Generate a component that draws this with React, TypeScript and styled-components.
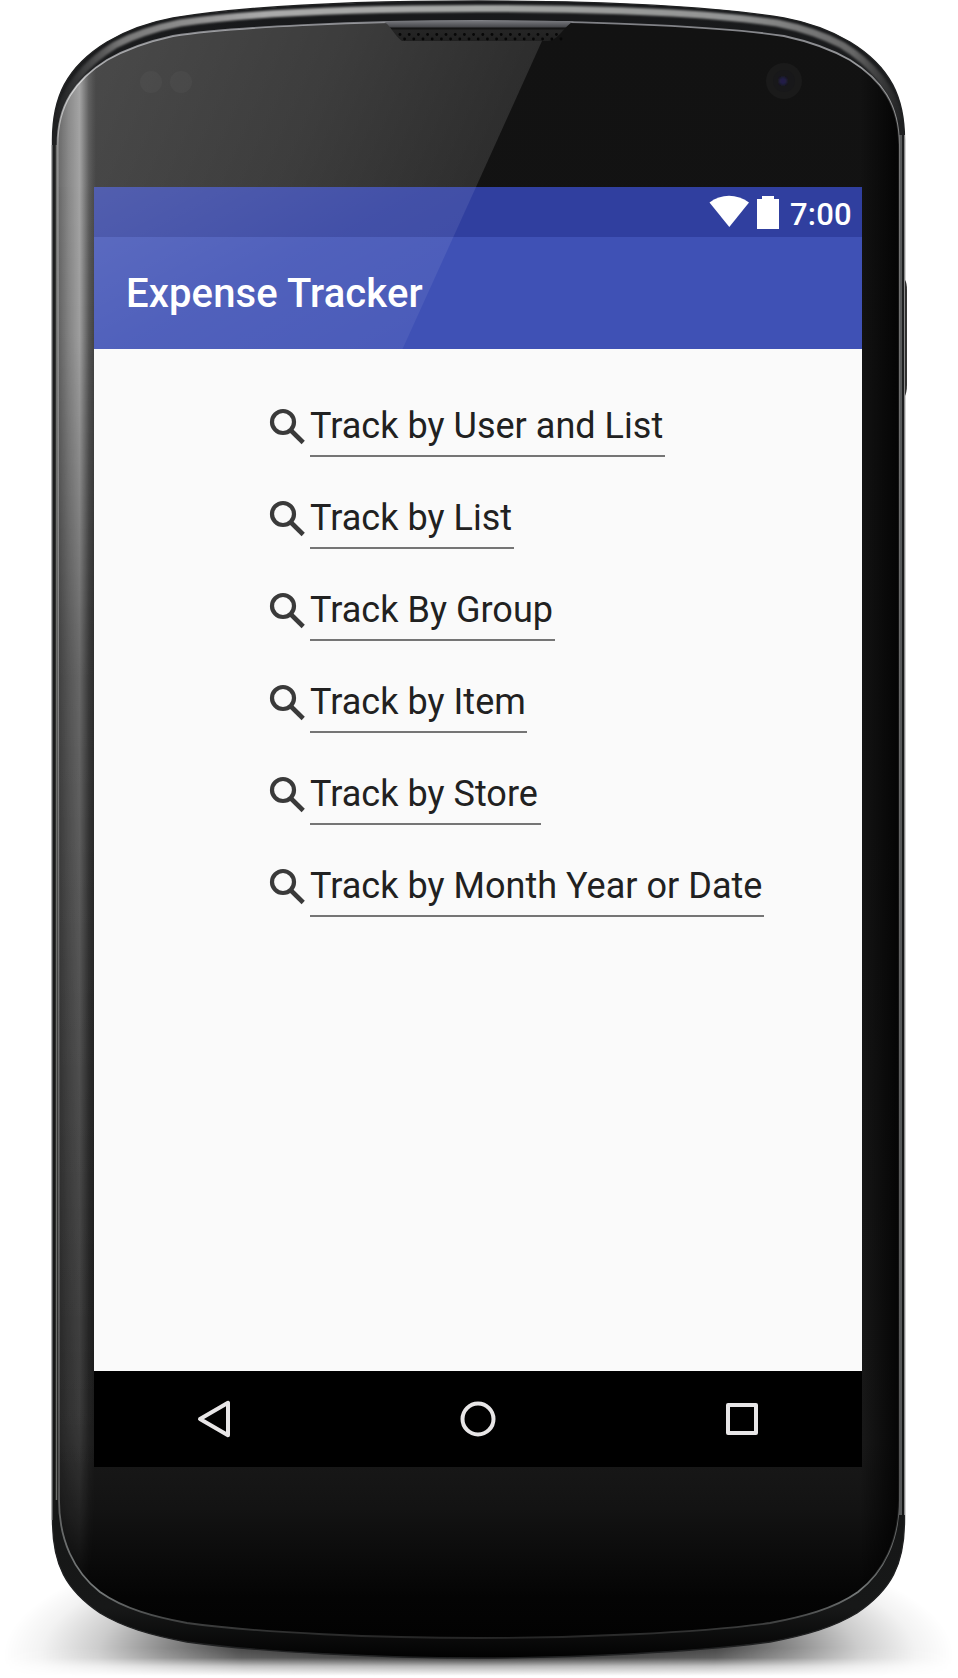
import React from "react";
import styled, { createGlobalStyle } from "styled-components";

const GlobalStyle = createGlobalStyle`
  body { margin: 0; background: #fff; }
  *, *::before, *::after { box-sizing: border-box; }
`;

const Stage = styled.main`
  position: relative;
  width: 958px;
  height: 1678px;
  padding: 187px 96px 211px 94px;
  overflow: hidden;
  font-family: Roboto, "Liberation Sans", sans-serif;
`;

const Artwork = styled.svg`
  position: absolute;
  inset: 0;
  width: 958px;
  height: 1678px;
  pointer-events: none;
`;

const Screen = styled.section`
  position: relative;
  display: flex;
  flex-direction: column;
  width: 768px;
  height: 1280px;
  background: #fafafa;
`;

const StatusBar = styled.div`
  display: flex;
  justify-content: flex-end;
  height: 50px;
  padding-right: 9px;
  background: #303f9f;
  color: #fff;
`;

const StatusIcons = styled.svg`
  width: 70px;
  height: 50px;
  margin-right: 11px;
`;

const Clock = styled.time`
  width: 63px;
  font-size: 31px;
  font-weight: 500;
  line-height: 56px;
  letter-spacing: 0.2px;
  white-space: nowrap;
`;

const Toolbar = styled.header`
  display: flex;
  align-items: center;
  height: 112px;
  padding: 2px 0 0 32px;
  background: #3f51b5;
`;

const Title = styled.h1`
  margin: 0;
  color: #fff;
  font-size: 40px;
  font-weight: 500;
  line-height: 48px;
  letter-spacing: 0.13px;
`;

const Content = styled.ul`
  flex: 1;
  display: flex;
  flex-direction: column;
  gap: 36px;
  margin: 0;
  padding: 52px 0 0 173px;
  list-style: none;
`;

const Entry = styled.li`
  display: flex;
  height: 56px;
`;

const SearchIcon = styled.svg`
  width: 38px;
  height: 38px;
  margin: 7px 5px 0 0;
`;

const Field = styled.span<{ $width: number }>`
  width: ${({ $width }) => $width}px;
  height: 56px;
  border-bottom: 2px solid #757575;
  color: #212121;
  font-size: 36px;
  line-height: 50px;
  letter-spacing: 0.03px;
  white-space: nowrap;
`;

const NavBar = styled.nav`
  display: flex;
  justify-content: center;
  gap: 216px;
  height: 96px;
  padding-top: 24px;
  background: #000;
`;

const NavIcon = styled.svg`
  width: 48px;
  height: 48px;
  fill: none;
  stroke: #e8e6e7;
  stroke-width: 4;
  stroke-linejoin: round;
`;

const entries = [
  { label: "Track by User and List", width: 355 },
  { label: "Track by List", width: 204 },
  { label: "Track By Group", width: 245 },
  { label: "Track by Item", width: 217 },
  { label: "Track by Store", width: 231 },
  { label: "Track by Month Year or Date", width: 454 },
];

const BODY =
  "M52.5 140C52.5 98 66 67 107 42C126 31 146 23 173 18C240 7 350 1 478.5 1C607 1 717 7 784 18C811 23 831 31 850 42C891 67 904.5 98 904.5 140V1520C904.5 1565 891 1590 857 1613C834 1627 807 1635 770 1642C697 1652 577 1658 478.5 1658C380 1658 260 1652 187 1642C150 1635 123 1627 100 1613C66 1590 52.5 1565 52.5 1520Z";
const FACE =
  "M57.5 145C57.5 105 75 80 107 60C127 48.5 150 41 173 36C230 27 360 21 478.5 21C597 21 727 27 784 36C807 41 830 48.5 850 60C882 80 899 105 899 145V1500C899 1540 884 1572 858 1592C834 1609 802 1617 770 1623C697 1633 577 1638 478.5 1638C380 1638 260 1633 187 1623C155 1617 124 1609 100 1592C74 1572 59 1540 59 1500Z";

const speakerHoles = Array.from({ length: 36 }, (_, i) => ({
  x: 400 + i * 4.6,
  y: i % 2 ? 39 : 34.5,
}));

function Device() {
  return (
    <Artwork viewBox="0 0 958 1678" aria-hidden="true">
      <defs>
        <linearGradient id="rim" gradientUnits="userSpaceOnUse" x1="0" y1="1" x2="0" y2="1658">
          <stop offset="0" stopColor="#17181a" />
          <stop offset=".08" stopColor="#202122" />
          <stop offset=".88" stopColor="#151616" />
          <stop offset=".97" stopColor="#171818" />
          <stop offset="1" stopColor="#020202" />
        </linearGradient>
        <linearGradient id="topShine" gradientUnits="userSpaceOnUse" x1="52" y1="0" x2="905" y2="0">
          <stop offset="0" stopColor="#555" stopOpacity="0" />
          <stop offset=".08" stopColor="#777" />
          <stop offset=".25" stopColor="#aaa" />
          <stop offset=".5" stopColor="#a5a7a5" />
          <stop offset=".8" stopColor="#929393" />
          <stop offset=".94" stopColor="#666" />
          <stop offset="1" stopColor="#555" stopOpacity="0" />
        </linearGradient>
        <linearGradient id="face" x1="0" y1="0" x2="0" y2="1">
          <stop offset="0" stopColor="#121212" />
          <stop offset=".5" stopColor="#141414" />
          <stop offset=".88" stopColor="#191919" />
          <stop offset=".92" stopColor="#131313" />
          <stop offset=".975" stopColor="#040404" />
          <stop offset="1" stopColor="#020202" />
        </linearGradient>
        <linearGradient id="leftBand" gradientUnits="userSpaceOnUse" x1="57" y1="0" x2="96" y2="0">
          <stop offset="0" stopColor="#fff" stopOpacity=".16" />
          <stop offset=".3" stopColor="#fff" stopOpacity=".36" />
          <stop offset=".58" stopColor="#fff" stopOpacity=".5" />
          <stop offset=".82" stopColor="#fff" stopOpacity=".12" />
          <stop offset="1" stopColor="#fff" stopOpacity="0" />
        </linearGradient>
        <linearGradient id="bandFade" gradientUnits="userSpaceOnUse" x1="0" y1="60" x2="0" y2="1600">
          <stop offset="0" stopColor="#fff" />
          <stop offset=".18" stopColor="#fff" />
          <stop offset=".4" stopColor="#929292" />
          <stop offset=".7" stopColor="#626262" />
          <stop offset=".88" stopColor="#484848" />
          <stop offset="1" stopColor="#000" />
        </linearGradient>
        <mask id="bandMask">
          <rect width="958" height="1678" fill="url(#bandFade)" />
        </mask>
        <linearGradient id="rightDark" gradientUnits="userSpaceOnUse" x1="860" y1="0" x2="899" y2="0">
          <stop offset="0" stopOpacity="0" />
          <stop offset="1" stopOpacity=".8" />
        </linearGradient>
        <linearGradient id="edgeLine" gradientUnits="userSpaceOnUse" x1="0" y1="20" x2="0" y2="1640">
          <stop offset="0" stopColor="#7e7f84" />
          <stop offset=".04" stopColor="#a5a6a8" />
          <stop offset=".08" stopColor="#777" />
          <stop offset=".9" stopColor="#555" />
          <stop offset=".97" stopColor="#777b7b" />
          <stop offset="1" stopColor="#222" />
        </linearGradient>
        <linearGradient id="faceGlare" gradientUnits="userSpaceOnUse" x1="80" y1="70" x2="500" y2="250">
          <stop offset="0" stopColor="#fff" stopOpacity=".235" />
          <stop offset=".5" stopColor="#fff" stopOpacity=".18" />
          <stop offset="1" stopColor="#fff" stopOpacity=".1" />
        </linearGradient>
        <linearGradient id="sideGlare" gradientUnits="userSpaceOnUse" x1="0" y1="187" x2="0" y2="1480">
          <stop offset="0" stopColor="#fff" stopOpacity=".22" />
          <stop offset=".35" stopColor="#fff" stopOpacity=".1" />
          <stop offset="1" stopColor="#fff" stopOpacity="0" />
        </linearGradient>
        <linearGradient id="grille" x1="0" y1="0" x2="0" y2="1">
          <stop offset="0" stopColor="#77787d" />
          <stop offset=".28" stopColor="#4a4b4f" />
          <stop offset=".36" stopColor="#111" />
          <stop offset=".48" stopColor="#252525" />
          <stop offset="1" stopColor="#202020" />
        </linearGradient>
        <radialGradient id="ground">
          <stop offset="0" stopOpacity=".9" />
          <stop offset=".5" stopOpacity=".72" />
          <stop offset=".66" stopOpacity=".46" />
          <stop offset=".8" stopOpacity=".2" />
          <stop offset=".92" stopOpacity=".05" />
          <stop offset="1" stopOpacity="0" />
        </radialGradient>
        <linearGradient id="floorFade" gradientUnits="userSpaceOnUse" x1="0" y1="1648" x2="0" y2="1676">
          <stop offset="0" stopColor="#fff" />
          <stop offset=".35" stopColor="#ddd" />
          <stop offset=".65" stopColor="#555" />
          <stop offset="1" stopColor="#000" />
        </linearGradient>
        <mask id="floorMask">
          <rect width="958" height="1678" fill="url(#floorFade)" />
        </mask>
        <filter id="soft">
          <feGaussianBlur stdDeviation="1.1" />
        </filter>
        <clipPath id="bodyClip"><path d={BODY} /></clipPath>
        <clipPath id="faceClip"><path d={FACE} /></clipPath>
      </defs>

      <g mask="url(#floorMask)">
        <ellipse cx="478.5" cy="1655" rx="475" ry="140" fill="url(#ground)" />
      </g>

      <path d="M903 280H905Q907 283 907 290V385Q907 393 904 398Z" fill="#333" />
      <path d={BODY} fill="url(#rim)" />
      <g clipPath="url(#bodyClip)">
        <path
          d="M58 120C64 90 84 64 115 45C134 35 155 28 180 23C245 13.500 355 8.500 478.500 8.500C602 8.500 712 13.500 777 23C802 28 823 35 842 45C873 64 893 90 900 120"
          fill="none"
          stroke="url(#topShine)"
          strokeWidth="7"
          filter="url(#soft)"
        />
      </g>
      <path d={BODY} fill="none" stroke="#202122" strokeWidth="1.400" />
      <path d="M52 145V1520" fill="none" stroke="#8d8f8f" strokeWidth="1" />
      <path d="M56.500 145V1500" fill="none" stroke="#6c6e6a" strokeWidth="1.500" />
      <path d="M900.500 135V1515" fill="none" stroke="#66696a" strokeWidth="3" opacity=".8" />
      <path d="M904.500 135V1515" fill="none" stroke="#8a8a8a" strokeWidth="1" />
      <path d={FACE} fill="url(#face)" stroke="url(#edgeLine)" strokeWidth="1.800" />
      <g clipPath="url(#faceClip)">
        <path d="M50 15H553.700L476 187H50Z" fill="url(#faceGlare)" />
        <rect x="50" y="187" width="44" height="1293" fill="url(#sideGlare)" />
        <g mask="url(#bandMask)">
          <rect x="56" y="50" width="42" height="1550" fill="url(#leftBand)" />
        </g>
        <rect x="860" y="60" width="40" height="1560" fill="url(#rightDark)" />
      </g>
      <path d="M382 21C390 23 394 36 402 41H548C559 40 563 27 574 21Z" fill="url(#grille)" />
      <g fill="#070707">
        {speakerHoles.map((hole) => (
          <circle key={hole.x} cx={hole.x} cy={hole.y} r="1.400" />
        ))}
      </g>
      <g fill="#fff" opacity=".025">
        <circle cx="151" cy="82" r="11" />
        <circle cx="181" cy="82" r="11" />
      </g>
      <circle cx="784" cy="81" r="18" fill="#1a1a1a" />
      <circle cx="784" cy="81" r="11" fill="#18181a" />
      <circle cx="783" cy="81" r="4" fill="#211f46" filter="url(#soft)" />
    </Artwork>
  );
}

function Glare() {
  return (
    <Artwork viewBox="0 0 958 1678" aria-hidden="true">
      <defs>
        <linearGradient id="screenGlare" gradientUnits="userSpaceOnUse" x1="100" y1="170" x2="270" y2="500">
          <stop offset="0" stopColor="#fff" stopOpacity=".17" />
          <stop offset=".45" stopColor="#fff" stopOpacity=".09" />
          <stop offset="1" stopColor="#fff" stopOpacity=".045" />
        </linearGradient>
      </defs>
      <path d="M94 187H476L402.500 349H94Z" fill="url(#screenGlare)" />
    </Artwork>
  );
}

export default function App() {
  return (
    <>
      <GlobalStyle />
      <Stage>
        <Device />
        <Screen>
          <StatusBar>
            <StatusIcons viewBox="0 0 70 50" fill="#fff">
              <path d="M.5 15.500C12 6.500 28 6.500 40 15.500L20.300 40Z" />
              <path d="M48 12H53V9H65V12H70V42H48Z" />
            </StatusIcons>
            <Clock>7:00</Clock>
          </StatusBar>
          <Toolbar>
            <Title>Expense Tracker</Title>
          </Toolbar>
          <Content>
            {entries.map((entry) => (
              <Entry key={entry.label}>
                <SearchIcon viewBox="0 0 38 38" fill="none" stroke="#3a3a3a">
                  <circle cx="16" cy="14" r="11" strokeWidth="4.200" />
                  <path d="M23.500 22L36.200 34.500" strokeWidth="4.600" />
                </SearchIcon>
                <Field $width={entry.width}>{entry.label}</Field>
              </Entry>
            ))}
          </Content>
          <NavBar>
            <NavIcon viewBox="0 0 48 48">
              <path d="M10 24L38 7.800V40.200Z" />
            </NavIcon>
            <NavIcon viewBox="0 0 48 48">
              <circle cx="24" cy="24" r="15.500" />
            </NavIcon>
            <NavIcon viewBox="0 0 48 48">
              <rect x="10" y="10" width="28" height="28" />
            </NavIcon>
          </NavBar>
        </Screen>
        <Glare />
      </Stage>
    </>
  );
}
